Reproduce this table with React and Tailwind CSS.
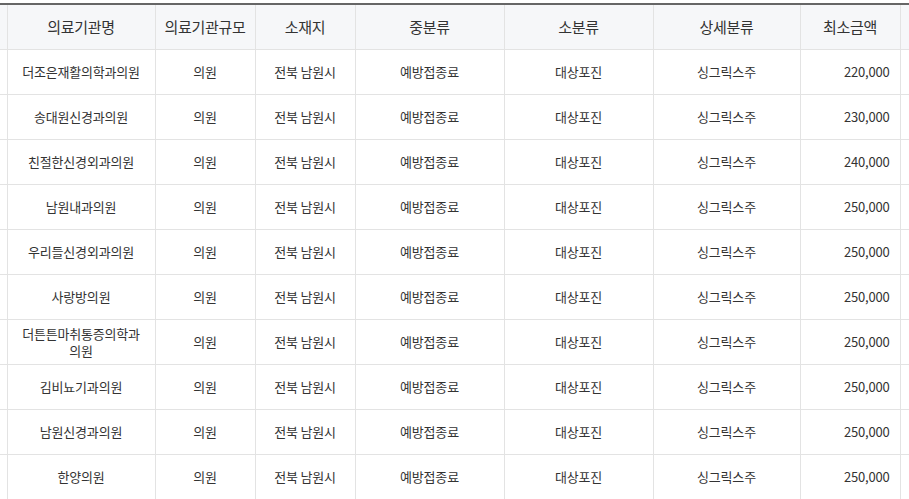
import React from "react";

const names = [
  "더조은재활의학과의원",
  "송대원신경과의원",
  "친절한신경외과의원",
  "남원내과의원",
  "우리들신경외과의원",
  "사랑방의원",
  "더튼튼마취통증의학과의원",
  "김비뇨기과의원",
  "남원신경과의원",
  "한양의원",
];

const prices = [
  "220,000",
  "230,000",
  "240,000",
  "250,000",
  "250,000",
  "250,000",
  "250,000",
  "250,000",
  "250,000",
  "250,000",
];

const headers = ["의료기관명", "의료기관규모", "소재지", "중분류", "소분류", "상세분류", "최소금액"];

const App = () => {
  return (
    <div
      className="w-[909px] h-[499px] overflow-hidden bg-white pt-[3px]"
      style={{ fontFamily: '"Malgun Gothic", "Noto Sans CJK KR", "Noto Sans", sans-serif' }}
    >
      <table className="table-fixed border-collapse w-[909px] border-t-2 border-t-[#666666] text-[#333333]">
        <colgroup>
          <col className="w-[7px]" />
          <col className="w-[148px]" />
          <col className="w-[100px]" />
          <col className="w-[100px]" />
          <col className="w-[149px]" />
          <col className="w-[149px]" />
          <col className="w-[147px]" />
          <col className="w-[100px]" />
          <col className="w-[9px]" />
        </colgroup>
        <thead>
          <tr className="h-[45px] bg-[#f6f7f9] text-[15px]">
            <th className="border-r border-b border-[#e3e3e3] p-0"></th>
            {headers.map((h) => (
              <th key={h} className="border border-t-0 border-[#e3e3e3] font-normal p-0 text-center tracking-[-0.3px]">
                {h}
              </th>
            ))}
            <th className="border-l border-b border-[#e3e3e3] p-0"></th>
          </tr>
        </thead>
        <tbody className="text-[13px]">
          {names.map((n, i) => (
            <tr key={i} className="h-[45px]">
              <td className="border-r border-b border-[#e3e3e3] p-0"></td>
              <td className="border border-[#e3e3e3] text-center px-[11px] leading-[17px] tracking-[-0.2px]">{n}</td>
              <td className="border border-[#e3e3e3] text-center px-1 tracking-[-0.2px]">의원</td>
              <td className="border border-[#e3e3e3] text-center px-1 tracking-[-0.2px]">전북 남원시</td>
              <td className="border border-[#e3e3e3] text-center px-1 tracking-[-0.2px]">예방접종료</td>
              <td className="border border-[#e3e3e3] text-center px-1 tracking-[-0.2px]">대상포진</td>
              <td className="border border-[#e3e3e3] text-center px-1 tracking-[-0.2px]">싱그릭스주</td>
              <td className="border border-[#e3e3e3] text-right pr-[10px] tracking-[-0.2px]">{prices[i]}</td>
              <td className="border-l border-b border-[#e3e3e3] p-0"></td>
            </tr>
          ))}
        </tbody>
      </table>
    </div>
  );
};

export default App;
